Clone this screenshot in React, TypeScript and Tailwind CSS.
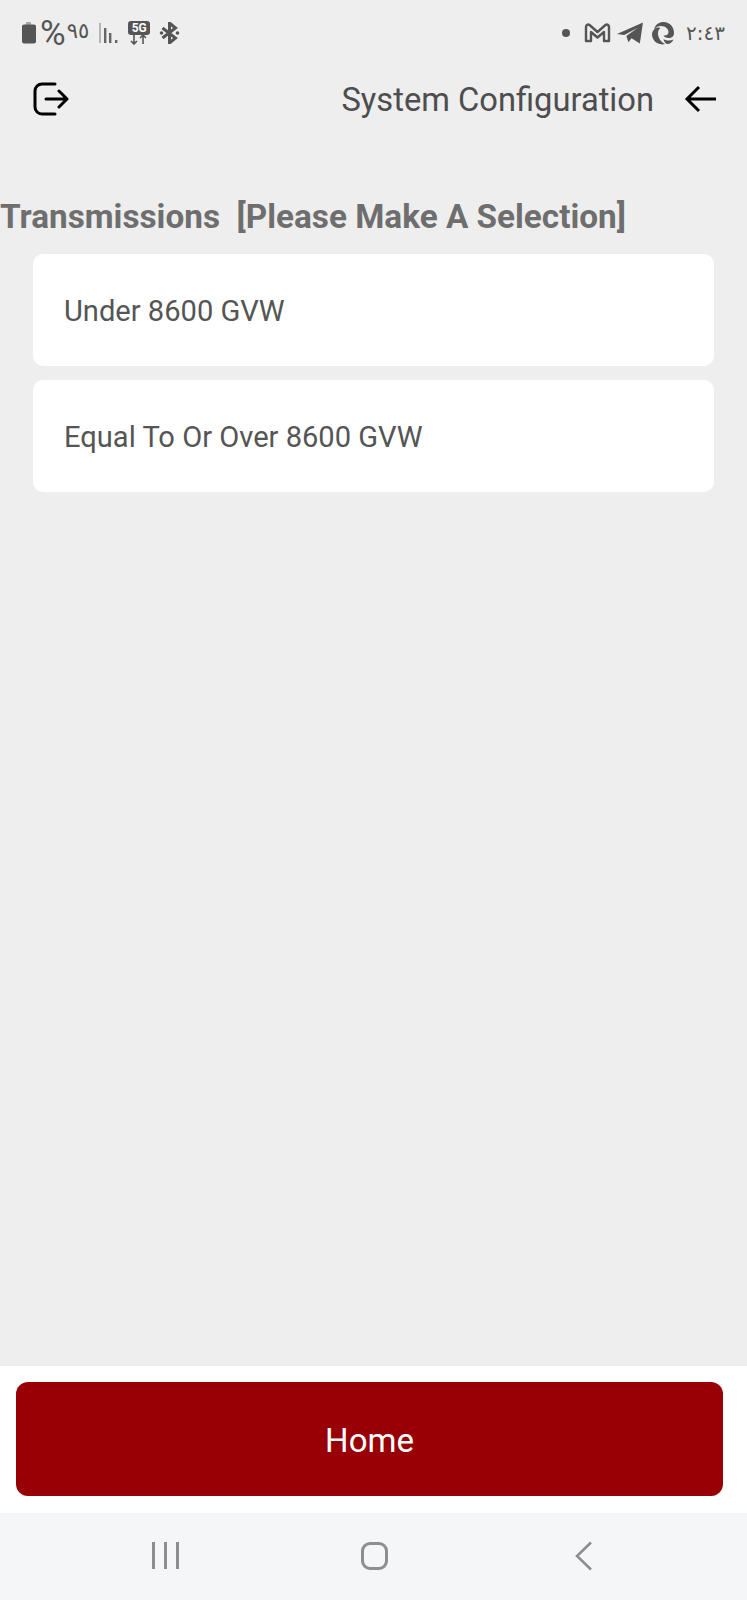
const font = { fontFamily: "Roboto, 'DejaVu Sans', sans-serif" }

function StatusLeft() {
  return (
    <div className="flex items-center">
      {/* battery */}
      <svg width="16" height="22" viewBox="0 0 16 22" className="ml-[21px]">
        <path d="M5 0.5h5v2h3a2 2 0 0 1 2 2v15a2 2 0 0 1-2 2H3a2 2 0 0 1-2-2v-15a2 2 0 0 1 2-2h2z" fill="#555" />
        <rect x="5" y="0" width="5" height="2.5" fill="#a8a8a8" />
      </svg>
      <span className="ml-[3px] text-[35px] leading-none text-[#555]">%</span>
      <span className="ml-[1px] text-[21px] leading-none text-[#555] pb-1 font-['DejaVu_Sans']">٩٥</span>
      {/* signal */}
      <svg width="20" height="22" viewBox="0 0 20 22" className="ml-[10px]">
        <rect x="0" y="1" width="2" height="20" fill="#b5b5b5" />
        <rect x="5" y="6" width="2.4" height="15" fill="#666" />
        <rect x="10" y="11" width="2.4" height="10" fill="#666" />
        <rect x="16" y="18" width="2.4" height="3" fill="#666" />
      </svg>
      {/* 5G */}
      <div className="ml-[9px] relative w-[22px] h-[24px]">
        <div className="bg-[#555] rounded-[3px] h-[14px] text-white text-[12px] leading-[14px] font-bold text-center">5G</div>
        <svg width="22" height="10" viewBox="0 0 22 10" className="absolute left-0 top-[14px]">
          <path d="M6 0v9M3 6l3 3 3-3M15 9V0M12 3l3-3 3 3" stroke="#555" strokeWidth="1.6" fill="none" />
        </svg>
      </div>
      {/* bluetooth */}
      <svg width="21" height="22" viewBox="0 0 20 22" className="ml-[9px]">
        <path d="M3 6l13 10-6 5V1l6 5L3 16" stroke="#555" strokeWidth="3" fill="none" />
        <circle cx="2" cy="11" r="1.800" fill="#555" />
        <circle cx="18" cy="11" r="1.800" fill="#555" />
      </svg>
    </div>
  )
}

function StatusRight() {
  return (
    <div className="flex items-center">
      <span className="w-2 h-2 rounded-full bg-[#555]" />
      {/* gmail */}
      <svg width="27" height="20" viewBox="0 0 27 20" className="ml-[14px]">
        <path d="M2 18V4c0-2 2-3 3.500-2L13.500 9l8-7c1.500-1 3.500 0 3.500 2v14h-5V9l-6.500 5.500L7 9v9z" stroke="#555" strokeWidth="2.400" fill="none" strokeLinejoin="round" />
      </svg>
      {/* telegram */}
      <svg width="27" height="22" viewBox="0 0 26 20" className="ml-[6px]">
        <path d="M0 11L25 0l-3 20-8-5-3 4-2-6 11-8-13 7z" fill="#555" />
      </svg>
      {/* edge */}
      <svg width="24" height="24" viewBox="0 0 24 24" className="ml-[7px]">
        <path d="M3 8C5 3 8 1 12.500 1 19 1 23 6 23 12c0 3-2 5-5.500 5-2.500 0-4.500-1-5-2.500 3 .5 5-1 5-3.500 0-3-3-6-7.500-6C7 5 5 6 3 8z" fill="#555" />
        <path d="M9 23C4 22 1 18 1 13c0-2 1.500-4 3-5.500 1-1 4-1.500 5.500-.5C7 8.500 6.500 12 7.500 15.500 8.500 19 11 21.500 14 23c-1.500.5-3.500.5-5 0z" fill="#555" />
        <path d="M16 23c3 0 5-1.500 6.500-4.500-3 1.500-7 1.500-10-.5.5 2.500 1.500 4 3.500 5z" fill="#555" />
      </svg>
      <span className="ml-[11px] mr-[22px] text-[20px] leading-none text-[#555] font-['DejaVu_Sans']">٢:٤٣</span>
    </div>
  )
}

function OptionCard({ label }: { label: string }) {
  return (
    <div className="bg-white rounded-[10px] h-[112px] flex items-center pl-[31px] pt-[3px] text-[29.1px] text-[#555]">
      {label}
    </div>
  )
}

export default function App() {
  return (
    <div className="w-[747px] h-[1600px] flex flex-col bg-[#eeeeee]" style={font}>
      <div className="h-[66px] flex items-center justify-between">
        <StatusLeft />
        <StatusRight />
      </div>

      <div className="h-[66px] flex items-center justify-between pl-[33px] pr-[30px]">
        <svg width="36" height="34" viewBox="0 0 36 34" fill="none" stroke="#000" strokeWidth="3" strokeLinecap="round" strokeLinejoin="round">
          <path d="M22 2H9a7 7 0 0 0-7 7v16a7 7 0 0 0 7 7h13" />
          <path d="M13 17h21M26 9l8 8-8 8" />
        </svg>
        <div className="flex items-center">
          <span className="text-[32.7px] text-[#4d4d4d] pt-[3px]">System Configuration</span>
          <svg width="33" height="28" viewBox="0 0 33 28" fill="none" stroke="#000" strokeWidth="3" className="ml-[30px]">
            <path d="M32 14H3M15 2L3 14l12 12" />
          </svg>
        </div>
      </div>

      <div className="mt-[62px] text-[33.3px] leading-[46px] font-bold text-[#6e6e6e] whitespace-pre">
        Transmissions  [Please Make A Selection]
      </div>

      <div className="mt-[14px] mx-[33px] flex flex-col gap-[14px]">
        <OptionCard label="Under 8600 GVW" />
        <OptionCard label="Equal To Or Over 8600 GVW" />
      </div>

      <div className="flex-1" />

      <div className="bg-white h-[147px] pl-[16px] pr-[24px] pt-[16px]">
        <button className="w-full h-[114px] rounded-[12px] bg-[#990005] text-white text-[33px] pt-[3px]">Home</button>
      </div>

      <div className="h-[87px] bg-[#f5f6f8] flex items-center">
        <div className="ml-[152px] flex gap-[9.5px] mt-[-2px]">
          <span className="w-[2.5px] h-[27px] bg-[#8e8e8e]" />
          <span className="w-[2.5px] h-[27px] bg-[#8e8e8e]" />
          <span className="w-[2.5px] h-[27px] bg-[#8e8e8e]" />
        </div>
        <span className="ml-[182px] mt-[-2px] w-[27px] h-[28px] border-[3px] border-[#8e8e8e] rounded-[9px]" />
        <svg width="18" height="30" viewBox="0 0 18 30" className="ml-[187px] mt-[-2px]">
          <path d="M16 1.500L2 15l14 13.500" stroke="#8e8e8e" strokeWidth="2.600" fill="none" />
        </svg>
      </div>
    </div>
  )
}
